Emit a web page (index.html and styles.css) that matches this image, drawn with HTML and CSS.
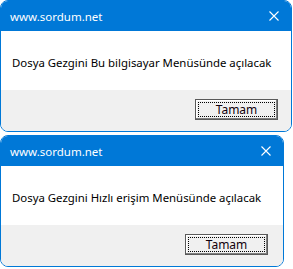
FILE: index.html
```html
<!DOCTYPE html>
<html lang="tr">
<head>
    <meta charset="utf-8">
    <title>Mesaj kutuları</title>
    <link rel="stylesheet" href="styles.css">
</head>
<body>

<div class="dialog wide">
    <div class="titlebar">
        <span class="title">www.sordum.net</span>
        <svg class="close" width="10" height="10" viewBox="0 0 10 10">
            <path d="M0.5 0.5 L9.5 9.5 M9.5 0.5 L0.5 9.5" stroke="white" stroke-width="1.1" fill="none"/>
        </svg>
    </div>
    <div class="message">Dosya Gezgini Bu bilgisayar Menüsünde açılacak</div>
    <div class="footer">
        <button class="ok">Tamam</button>
    </div>
</div>

<div class="dialog narrow">
    <div class="titlebar">
        <span class="title">www.sordum.net</span>
        <svg class="close" width="10" height="10" viewBox="0 0 10 10">
            <path d="M0.5 0.5 L9.5 9.5 M9.5 0.5 L0.5 9.5" stroke="white" stroke-width="1.1" fill="none"/>
        </svg>
    </div>
    <div class="message">Dosya Gezgini Hızlı erişim Menüsünde açılacak</div>
    <div class="footer">
        <button class="ok">Tamam</button>
    </div>
</div>

</body>
</html>
```

FILE: styles.css
```css
html {
    font-family: "Noto Sans", "Open Sans", sans-serif;
    font-size: 11.4px;
}

body {
    margin: 0;
    background-color: white;
    display: flex;
    flex-direction: column;
    gap: 3px;
}

.dialog {
    border: 1px solid #0078d7;
    border-radius: 8px;
    overflow: hidden;
    background-color: white;
    display: flex;
    flex-direction: column;
}

.wide {
    width: 290px;
}

.narrow {
    width: 282px;
}

.titlebar {
    height: 30px;
    background-color: #0078d7;
    color: white;
    display: flex;
    align-items: center;
    justify-content: space-between;
    padding: 0 8px 0 9px;
}

.title {
    font-size: 11.5px;
}

.close {
    margin-right: 4px;
}

.message {
    height: 59px;
    box-sizing: border-box;
    padding: 3px 0 0 11px;
    display: flex;
    align-items: center;
    color: black;
}

.footer {
    height: 41px;
    background-color: #f0f0f0;
    display: flex;
    justify-content: flex-end;
    align-items: flex-start;
    padding-top: 9px;
    box-sizing: border-box;
}

.wide .footer {
    padding-right: 13px;
}

.narrow .footer {
    padding-right: 15px;
}

.ok {
    width: 83px;
    height: 21px;
    font-family: "Noto Sans", sans-serif;
    font-size: 12px;
    color: #10000c;
    background-color: #f0f0f0;
    border: 1px solid #5a5a5a;
    box-shadow: inset -1px -1px #808080, inset 1px 1px white;
    outline: 1px dotted black;
    outline-offset: -4px;
    padding: 0;
}
```
